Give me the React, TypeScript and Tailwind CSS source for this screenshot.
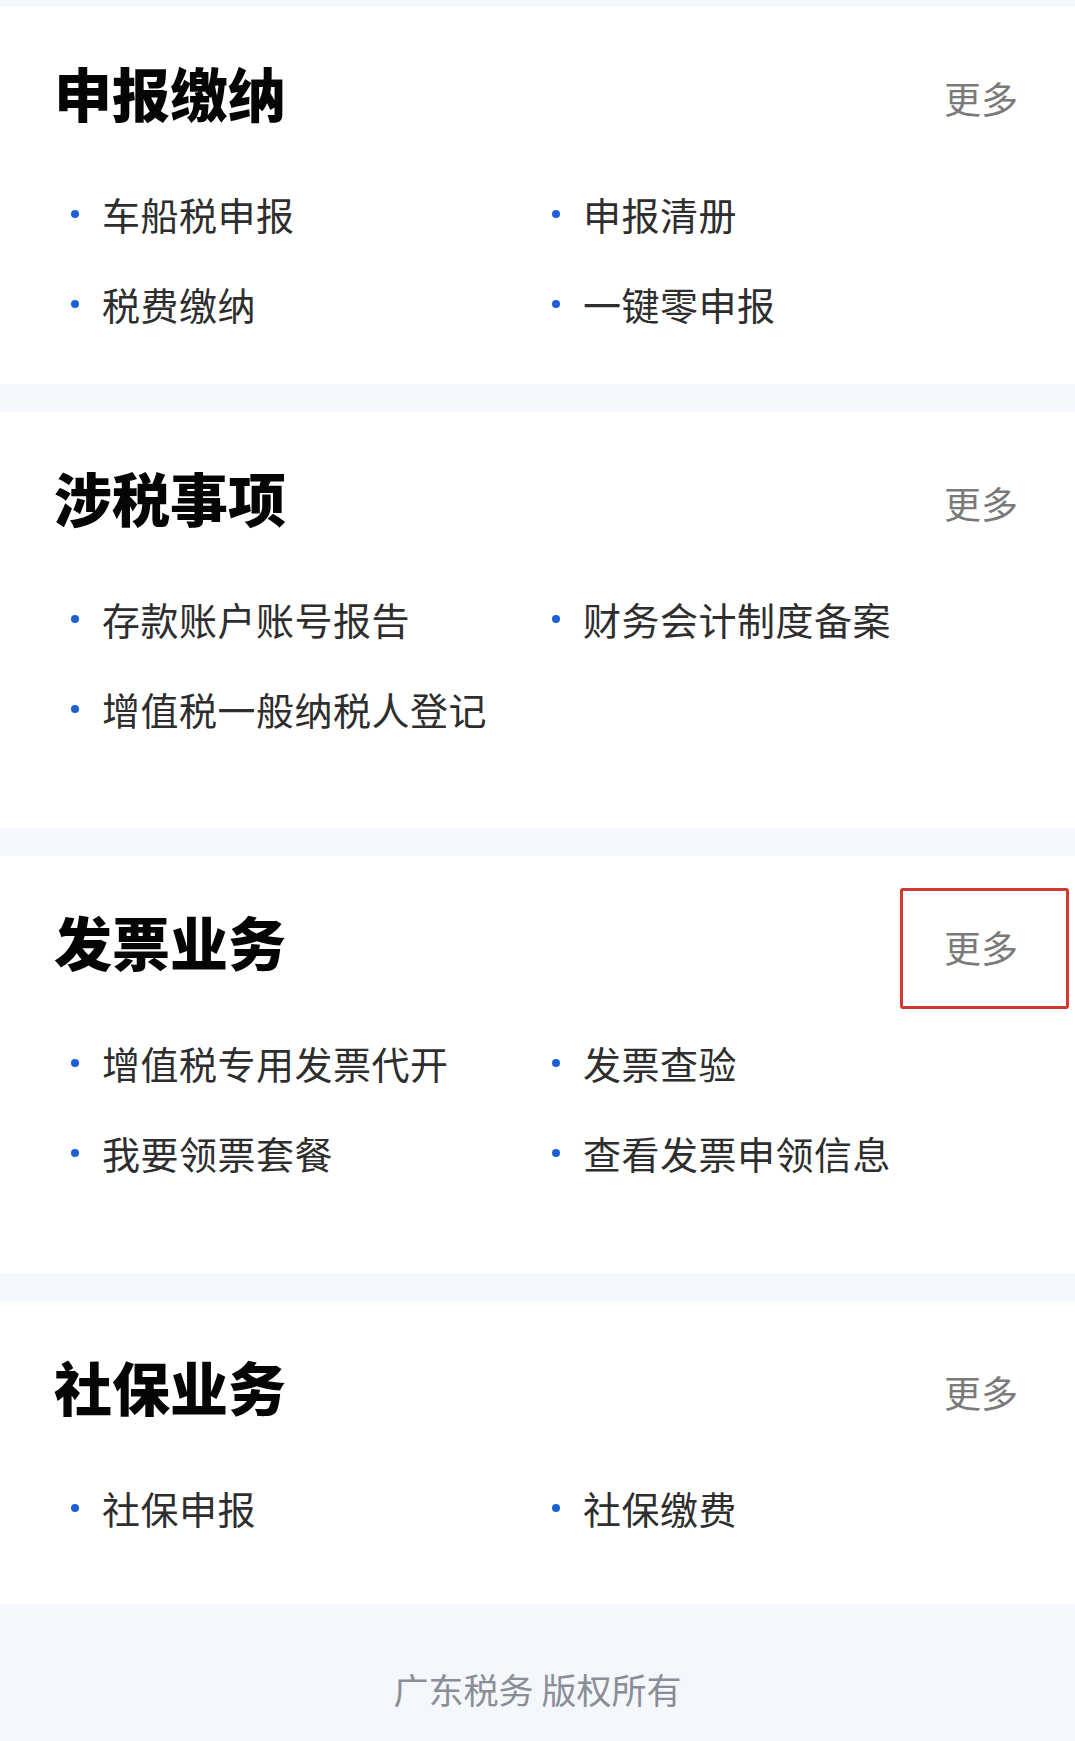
import React from "react";

type Section = {
  title: string;
  items: string[];
  height: string;
  highlight?: boolean;
};

const sections: Section[] = [
  { title: "申报缴纳", items: ["车船税申报", "申报清册", "税费缴纳", "一键零申报"], height: "h-[377px]" },
  { title: "涉税事项", items: ["存款账户账号报告", "财务会计制度备案", "增值税一般纳税人登记"], height: "h-[416px]" },
  { title: "发票业务", items: ["增值税专用发票代开", "发票查验", "我要领票套餐", "查看发票申领信息"], height: "h-[417px]", highlight: true },
  { title: "社保业务", items: ["社保申报", "社保缴费"], height: "h-[303px]" },
];

function SectionCard({ s }: { s: Section }) {
  return (
    <div className={`bg-white ${s.height} pt-[35px]`}>
      <div className="flex h-[100px] items-center justify-between pl-[54px] pr-[57px]">
        <h2 className="text-[58px] font-black leading-none text-[#050505]">{s.title}</h2>
        <div className="relative pt-[14px]">
          <span className="text-[37px] leading-none text-[#7a7a7a]">更多</span>
          {s.highlight && (
            <div className="absolute left-[-44px] top-[-27px] h-[121px] w-[169px] rounded-[3px] border-[3px] border-[#d23a30]" />
          )}
        </div>
      </div>
      <div className="mt-[27px] grid grid-cols-[481px_1fr] pl-[71px]">
        {s.items.map((it) => (
          <div key={it} className="flex h-[90px] items-center">
            <span className="h-[8px] w-[8px] shrink-0 rounded-full bg-[#1d5fd6]" />
            <span className="ml-[23px] text-[38px] leading-none text-[#2e2e2e] tracking-[0.5px]">{it}</span>
          </div>
        ))}
      </div>
    </div>
  );
}

export default function App() {
  return (
    <div
      className="min-h-[1741px] w-full bg-[#f4f7fc] pt-[7px]"
      style={{ fontFamily: '"Noto Sans CJK SC", "Noto Sans", sans-serif' }}
    >
      <div className="flex flex-col gap-[28px]">
        {sections.map((s) => (
          <SectionCard key={s.title} s={s} />
        ))}
      </div>
      <div className="flex h-[138px] items-start justify-center pt-[67px]">
        <span className="text-[35px] leading-none text-[#8a8e96]">广东税务 版权所有</span>
      </div>
    </div>
  );
}
